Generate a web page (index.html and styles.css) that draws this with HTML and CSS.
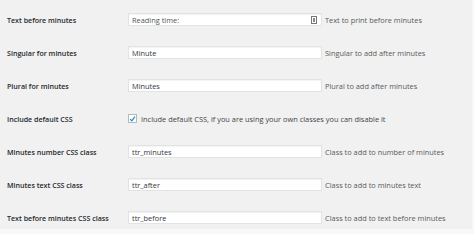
FILE: index.html
```html
<!DOCTYPE html>
<html lang="en">
<head>
    <meta charset="UTF-8">
    <title>Reading time settings</title>
    <link rel="stylesheet" href="styles.css">
</head>
<body>

    <!-- Settings form -->
    <div class="wrap">
        <div class="form-table">
            <div class="row">
                <label class="label">Text before minutes</label>
                <div class="field">
                    <div class="input">
                        <span class="value placeholder">Reading time:</span>
                        <svg class="key" width="6" height="8" viewBox="0 0 6 8">
                            <rect x="0.5" y="0.5" width="5" height="7" fill="none" stroke="#777" stroke-width="1"/>
                            <rect x="2" y="2" width="2" height="4" fill="#888"/>
                        </svg>
                    </div>
                </div>
                <div class="desc">Text to print before minutes</div>
            </div>

            <div class="row">
                <label class="label">Singular for minutes</label>
                <div class="field"><div class="input"><span class="value">Minute</span></div></div>
                <div class="desc">Singular to add after minutes</div>
            </div>

            <div class="row">
                <label class="label">Plural for minutes</label>
                <div class="field"><div class="input"><span class="value">Minutes</span></div></div>
                <div class="desc">Plural to add after minutes</div>
            </div>

            <div class="row">
                <label class="label">Include default CSS</label>
                <div class="field check-field">
                    <span class="checkbox">
                        <svg width="8" height="8" viewBox="0 0 8 8">
                            <path d="M1.3 4.2 L3.2 6.2 L6.8 1.4" fill="none" stroke="#1e8cbe" stroke-width="1.4"/>
                        </svg>
                    </span>
                    <span class="check-text">Include default CSS, if you are using your own classes you can disable it</span>
                </div>
            </div>

            <div class="row">
                <label class="label">Minutes number CSS class</label>
                <div class="field"><div class="input"><span class="value">ttr_minutes</span></div></div>
                <div class="desc">Class to add to number of minutes</div>
            </div>

            <div class="row">
                <label class="label">Minutes text CSS class</label>
                <div class="field"><div class="input"><span class="value">ttr_after</span></div></div>
                <div class="desc">Class to add to minutes text</div>
            </div>

            <div class="row">
                <label class="label">Text before minutes CSS class</label>
                <div class="field"><div class="input"><span class="value">ttr_before</span></div></div>
                <div class="desc">Class to add to text before minutes</div>
            </div>
        </div>
    </div>

</body>
</html>
```

FILE: styles.css
```css
body {
    font-family: 'Open Sans', 'Noto Sans', sans-serif;
    font-size: 7.4px;
    background-color: #f8f8f8;
    color: #444;
    margin: 0;
    padding: 0;
}

.wrap {
    width: 472px;
    height: 229px;
    padding-top: 3px;
    box-sizing: border-box;
    background-color: #f1f1f1;
}

/* Form rows */
.form-table {
    display: flex;
    flex-direction: column;
}

.row {
    display: grid;
    grid-template-columns: 121px 197px auto;
    align-items: center;
    height: 33px;
    padding-left: 7px;
}

.label {
    font-size: 7.1px;
    font-weight: 600;
    color: #23282d;
}

.input {
    display: flex;
    align-items: center;
    justify-content: space-between;
    width: 194px;
    height: 13px;
    background-color: #fff;
    border: 1px solid #e3e3e3;
    box-shadow: inset 0 1px 1px rgba(0, 0, 0, 0.05);
    padding: 0 4px 0 3px;
    box-sizing: border-box;
}

.value {
    color: #32373c;
}

.value.placeholder {
    color: #555;
}

.key {
    display: block;
}

.desc {
    color: #5a5a5a;
}

/* Checkbox */
.check-field {
    grid-column: 2 / 4;
    display: flex;
    align-items: center;
}

.checkbox {
    display: flex;
    align-items: center;
    justify-content: center;
    width: 9px;
    height: 9px;
    background-color: #fff;
    border: 1px solid #b4b9be;
    box-sizing: border-box;
    margin-right: 4px;
}

.check-text {
    color: #444;
}
```
